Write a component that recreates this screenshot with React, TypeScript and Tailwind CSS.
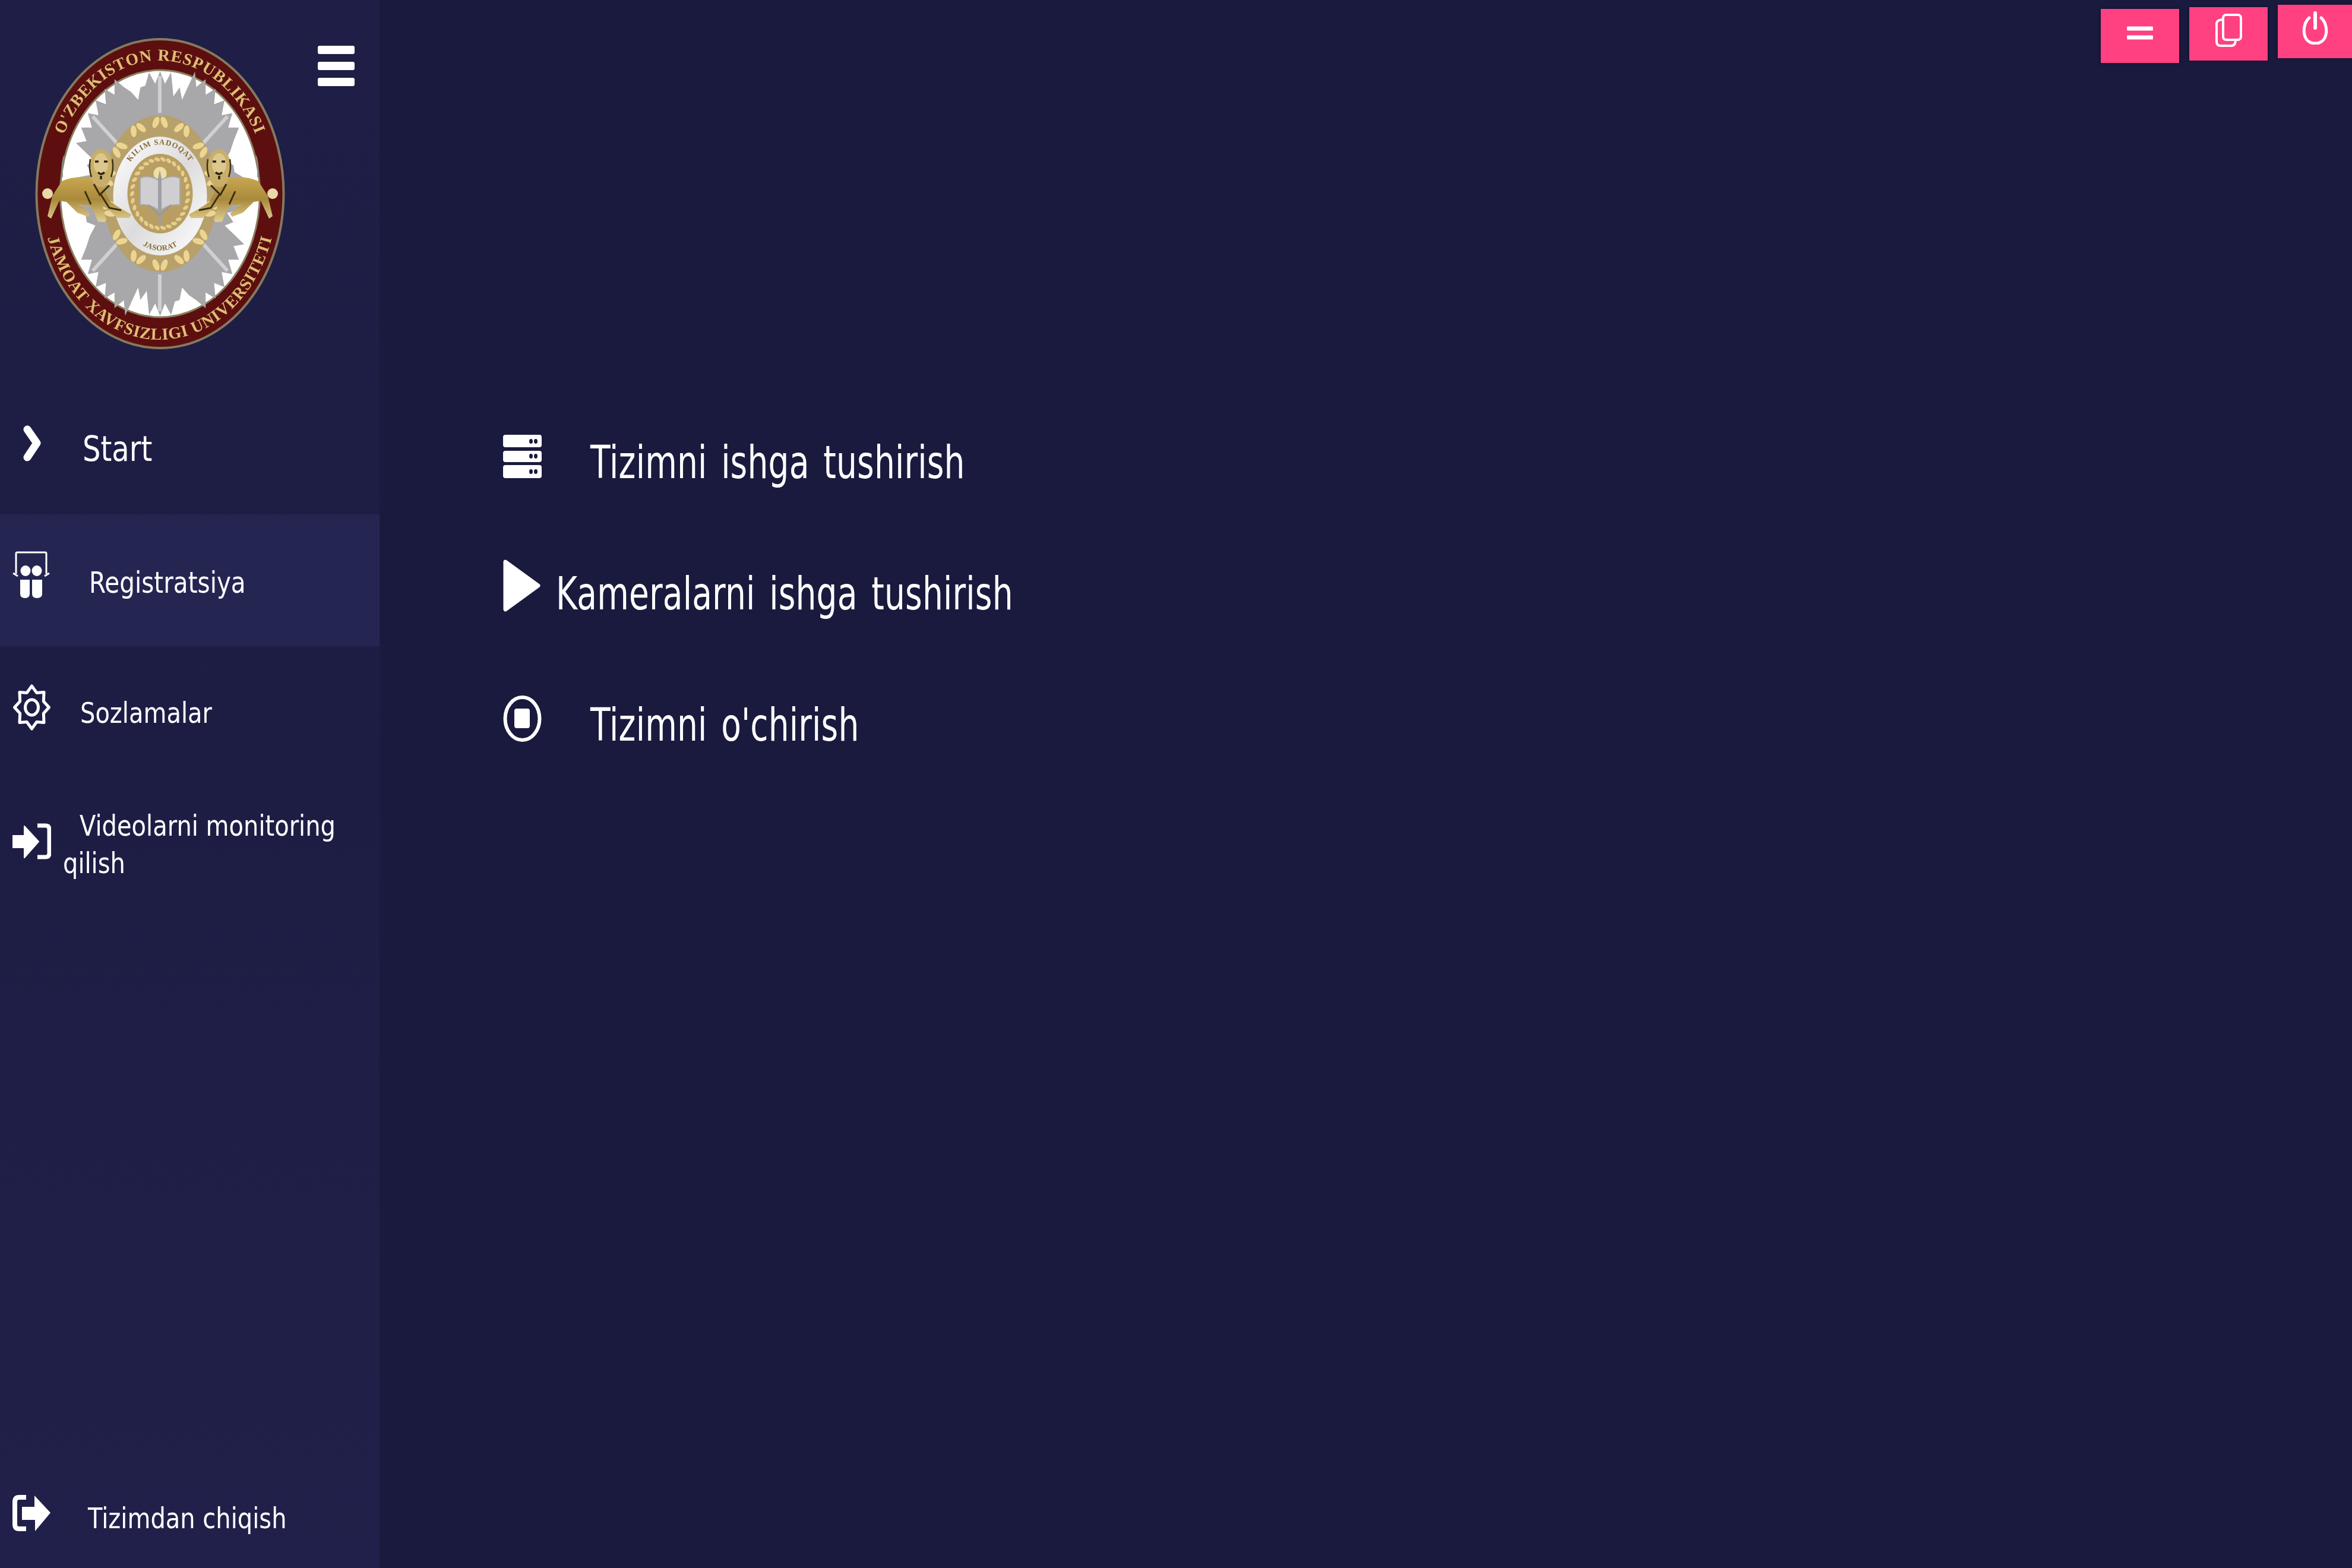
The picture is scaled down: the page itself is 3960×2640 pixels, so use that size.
import React from "react";

const cx = 269.5;
const cy = 326;

function starPoints() {
  const pts: string[] = [];
  const n = 48;
  for (let i = 0; i < n * 2; i++) {
    const a = (i / (n * 2)) * Math.PI * 2 - Math.PI / 2;
    const step = Math.round((i / (n * 2)) * 16) % 4;
    const quarter = Math.round((i / (n * 2)) * 8) % 2;
    const base = quarter === 1 ? 1.08 : step === 0 ? 1.0 : 0.9;
    const r = i % 2 === 0 ? base : base * 0.9;
    pts.push(`${cx + Math.cos(a) * r * 142},${cy + Math.sin(a) * r * 206}`);
  }
  return pts.join(" ");
}

function gearPoints() {
  const pts: string[] = [];
  for (let i = 0; i < 16; i++) {
    const a = (i / 16) * Math.PI * 2 - Math.PI / 2;
    const r = i % 2 === 0 ? 1 : 0.74;
    pts.push(`${32.5 + Math.cos(a) * r * 29},${40 + Math.sin(a) * r * 36}`);
  }
  return pts.join(" ");
}

function Lion() {
  return (
    <g>
      <path
        d="M104 305C120 297 145 297 160 300L172 312L186 340L205 352L221 361L218 367L198 367L183 353L172 346L179 370L176 374L165 373L155 350L148 345L134 345L152 360L148 365L130 358L112 340L100 338L86 368L80 364L88 330Z"
        fill="url(#lionBody)"
      />
      <ellipse cx="170" cy="283" rx="20" ry="32" fill="#c9ae6a" />
      <ellipse cx="170" cy="276" rx="12" ry="18" fill="#dcc78d" />
      <path d="M160 272h6M175 272h6M165 290q5 6 11 0M170 296v6" stroke="#2c2410" strokeWidth="3.5" fill="none" />
      <path d="M152 268q-3 16 2 30M189 268q3 16-2 30" stroke="#3c3116" strokeWidth="2.5" fill="none" />
      <path d="M158 310l10 18l16-16M143 322l10 22M170 328l14 22l20 4" stroke="#3a2e12" strokeWidth="3" fill="none" />
      <path d="M108 262q-5 14 -3 36" stroke="#888" strokeWidth="2" fill="none" />
    </g>
  );
}

function Logo() {
  const leaves = [];
  for (let i = 0; i < 14; i++) {
    const a = (i / 14) * Math.PI * 2 - Math.PI / 2;
    const x = cx + Math.cos(a) * 88;
    const y = cy + Math.sin(a) * 120;
    const deg = (a * 180) / Math.PI + 90;
    leaves.push(
      <g key={i} transform={`translate(${x} ${y}) rotate(${deg})`}>
        <ellipse cx="-7" cy="0" rx="5" ry="10" fill="#ecd590" transform="rotate(22 -7 0)" />
        <ellipse cx="7" cy="0" rx="5" ry="10" fill="#ecd590" transform="rotate(-22 7 0)" />
      </g>
    );
  }
  const laurels = [];
  for (let i = 0; i < 30; i++) {
    const a = (i / 30) * Math.PI * 2;
    laurels.push(
      <ellipse
        key={i}
        cx={cx + Math.cos(a) * 47}
        cy={cy + Math.sin(a) * 58}
        rx="3"
        ry="5"
        fill="#e6cf8e"
        transform={`rotate(${(a * 180) / Math.PI + 30} ${cx + Math.cos(a) * 47} ${cy + Math.sin(a) * 58})`}
      />
    );
  }
  return (
    <svg viewBox="50 55 440 545" className="h-[545px] w-[440px] shrink-0 blur-[0.7px]">
      <defs>
        <linearGradient id="lionBody" x1="0" y1="0" x2="0" y2="1">
          <stop offset="0" stopColor="#c9a750" />
          <stop offset="0.5" stopColor="#a98a3c" />
          <stop offset="1" stopColor="#e3cf94" />
        </linearGradient>
        <linearGradient id="whiteBand" x1="0" y1="0" x2="1" y2="1">
          <stop offset="0" stopColor="#ffffff" />
          <stop offset="0.5" stopColor="#dcdcdc" />
          <stop offset="1" stopColor="#ffffff" />
        </linearGradient>
        <path id="topArc" d="M89 326A180 224 0 0 1 449 326" />
        <path id="botArc" d="M71 326A198 246 0 0 0 467 326" />
        <path id="innerTop" d="M206 320A63 76 0 0 1 333 320" />
        <path id="innerBot" d="M205 340A65 82 0 0 0 335 340" />
      </defs>
      <ellipse cx={cx} cy={cy} rx="208" ry="260" fill="#5d0f10" stroke="#857a5e" strokeWidth="4" />
      <ellipse cx={cx} cy={cy} rx="168" ry="208" fill="#ffffff" stroke="#8b8060" strokeWidth="3" />
      <polygon points={starPoints()} fill="#a8a8aa" />
      <g stroke="#d0d0d2" strokeWidth="6">
        <path d="M269 128V190M269 462V524M156 196L205 250M383 196L334 250M156 456L205 402M383 456L334 402" />
      </g>
      <ellipse cx={cx} cy={cy} rx="97" ry="132" fill="#b8a06a" />
      {leaves}
      <ellipse cx={cx} cy="330" rx="79" ry="100" fill="url(#whiteBand)" />
      <ellipse cx={cx} cy={cy} rx="55" ry="67" fill="#b89e62" />
      {laurels}
      <circle cx={cx} cy="292" r="11" fill="#f0dfa5" />
      <path d="M269 304C255 296 243 296 236 300V345C248 344 260 348 269 356C278 348 290 344 303 345V300C295 296 283 296 269 304Z" fill="#cfcfd2" stroke="#a8a8ac" strokeWidth="2" />
      <path d="M269 286L272 300V360L269 390L266 360V300Z" fill="#a0a0a4" />
      <path d="M250 345L269 362L288 345" stroke="#999" strokeWidth="3" fill="none" />
      <g fontFamily="'Liberation Serif', serif" fontWeight="700" fill="#dcbf74">
        <text fontSize="28" textAnchor="middle" letterSpacing="1">
          <textPath href="#topArc" startOffset="50%">O'ZBEKISTON RESPUBLIKASI</textPath>
        </text>
        <text fontSize="28" textAnchor="middle" letterSpacing="1">
          <textPath href="#botArc" startOffset="50%">JAMOAT XAVFSIZLIGI UNIVERSITETI</textPath>
        </text>
      </g>
      <g fontFamily="'Liberation Serif', serif" fontWeight="700" fill="#8a6a36" fontSize="13">
        <text textAnchor="middle" letterSpacing="1">
          <textPath href="#innerTop" startOffset="50%">KILIM   SADOQAT</textPath>
        </text>
        <text textAnchor="middle" letterSpacing="0.5">
          <textPath href="#innerBot" startOffset="50%">JASORAT</textPath>
        </text>
      </g>
      <Lion />
      <g transform="translate(539 0) scale(-1 1)">
        <Lion />
      </g>
      <circle cx="80" cy="326" r="9" fill="#e9d9a8" />
      <circle cx="459" cy="326" r="9" fill="#e9d9a8" />
    </svg>
  );
}

const SideIcons = {
  chevron: (
    <svg width="65" height="64" viewBox="0 0 65 64" className="shrink-0">
      <path d="M25 7L41 30L25 54" stroke="#fff" strokeWidth="13" strokeLinejoin="round" strokeLinecap="round" fill="none" />
    </svg>
  ),
  reg: (
    <svg width="65" height="80" viewBox="0 0 65 80" className="shrink-0">
      <path d="M6 38V4Q6 2 8 2H55Q57 2 57 4V38" stroke="#fff" strokeWidth="3" fill="none" />
      <path d="M1 37L9 42M62 37L54 42" stroke="#fff" strokeWidth="3" fill="none" />
      <ellipse cx="22" cy="33" rx="8.5" ry="9" fill="#fff" />
      <ellipse cx="41" cy="33" rx="8.5" ry="9" fill="#fff" />
      <path d="M13 48H29V72Q29 79 21 79Q13 79 13 72Z" fill="#fff" />
      <path d="M33 48H50V72Q50 79 41 79Q33 79 33 72Z" fill="#fff" />
    </svg>
  ),
  gear: (
    <svg width="65" height="80" viewBox="0 0 65 80" className="shrink-0">
      <polygon points={gearPoints()} stroke="#fff" strokeWidth="5" strokeLinejoin="round" fill="none" />
      <ellipse cx="32.5" cy="40" rx="11" ry="13" stroke="#fff" strokeWidth="5" fill="none" />
    </svg>
  ),
  login: (
    <svg width="65" height="62" viewBox="0 0 65 62" className="shrink-0">
      <path d="M0 21H20V5L44 31L20 58V41H0Z" fill="#fff" strokeLinejoin="round" stroke="#fff" strokeWidth="2" />
      <path d="M42 4H56Q62 4 62 11V50Q62 57 56 57H42" stroke="#fff" strokeWidth="7" fill="none" />
    </svg>
  ),
  logout: (
    <svg width="65" height="62" viewBox="0 0 65 62" className="shrink-0">
      <path d="M23 4H11Q4 4 4 12V49Q4 57 11 57H23" stroke="#fff" strokeWidth="8" fill="none" />
      <path d="M16 20H37V1L64 30L38 61V42H16Z" fill="#fff" />
    </svg>
  ),
};

function NavRow({
  icon,
  label,
  active,
  textClass,
  iconClass,
}: {
  icon: React.ReactNode;
  label: string;
  active?: boolean;
  textClass: string;
  iconClass: string;
}) {
  return (
    <div className={`flex h-[222px] items-center pl-[21px] ${active ? "bg-[#252552]" : ""}`}>
      <div className={iconClass}>{icon}</div>
      <span className={`inline-block origin-center whitespace-nowrap scale-y-[1.22] ${textClass}`}>{label}</span>
    </div>
  );
}

function MainRow({ icon, label, gap }: { icon: React.ReactNode; label: string; gap: string }) {
  return (
    <div className={`flex h-[221px] items-center ${gap}`}>
      {icon}
      <span className="mt-[3px] inline-block origin-center scale-y-[1.4] whitespace-nowrap text-[55px] leading-none tracking-[0.2px] text-white [word-spacing:6px]">
        {label}
      </span>
    </div>
  );
}

export default function App() {
  return (
    <div className="flex h-[2640px] w-[3960px] overflow-hidden bg-[#1a1a3e] font-['DejaVu_Sans',sans-serif]">
      <aside className="flex h-full w-[639px] shrink-0 flex-col bg-linear-to-b from-[#1e1e46] via-[#1d1d44] to-[#20204a] text-white">
        <div className="flex h-[644px] items-start pl-[50px] pt-[55px]">
          <Logo />
          <div className="ml-[45px] mt-[22px] flex w-[62px] flex-col gap-[13px]">
            <div className="h-[14px] rounded-[3px] bg-white" />
            <div className="h-[14px] rounded-[3px] bg-white" />
            <div className="h-[14px] rounded-[3px] bg-white" />
          </div>
        </div>
        <NavRow icon={SideIcons.chevron} label="Start" textClass="ml-[53px] text-[48px] leading-none" iconClass="-mt-[14px]" />
        <NavRow
          icon={SideIcons.reg}
          label="Registratsiya"
          active
          textClass="ml-[64px] mt-[9px] text-[40.5px] leading-none"
          iconClass="-mt-[18px]"
        />
        <NavRow icon={SideIcons.gear} label="Sozlamalar" textClass="ml-[49px] mt-[2px] text-[40px] leading-none" iconClass="-mt-[16px]" />
        <div className="flex h-[222px] items-center pl-[21px]">
          <div className="-mt-[8px]">{SideIcons.login}</div>
          <p className="ml-[20px] mt-[1px] origin-center scale-y-[1.22] whitespace-nowrap text-[40px] leading-[51px] indent-[28px]">
            Videolarni monitoring
            <br />
            qilish
          </p>
        </div>
        <div className="mt-auto flex h-[200px] items-center pl-[21px] pt-[24px]">
          <div className="-mt-[9px]">{SideIcons.logout}</div>
          <span className="ml-[62px] mt-[8px] inline-block origin-center scale-y-[1.22] whitespace-nowrap text-[40px] leading-none">
            Tizimdan chiqish
          </span>
        </div>
      </aside>
      <main className="flex min-w-0 flex-1 flex-col">
        <div className="flex h-[106px] justify-end gap-[17px]">
          <button className="mt-[15px] flex h-[91px] w-[132px] items-start justify-center bg-[#ff4081] pt-[29px] shadow-[0_0_4px_#0a0a2a]">
            <svg width="44" height="24" viewBox="0 0 44 24">
              <path d="M2 4H42M2 19H42" stroke="#fff" strokeWidth="7" strokeLinecap="round" />
            </svg>
          </button>
          <button className="mt-[12px] flex h-[90px] w-[132px] items-start justify-center bg-[#ff4081] pt-[11px] shadow-[0_0_4px_#0a0a2a]">
            <svg width="46" height="56" viewBox="0 0 46 56" fill="none" stroke="#fff" strokeWidth="4">
              <rect x="14" y="2" width="30" height="42" rx="5" />
              <path d="M12 10Q3 11 3 17V47Q3 54 10 54H28Q34 54 35 46" />
            </svg>
          </button>
          <button className="mt-[8px] flex h-[90px] w-[125px] items-start justify-center bg-[#ff4081] pt-[11px] shadow-[0_0_4px_#0a0a2a]">
            <svg width="44" height="56" viewBox="0 0 44 56" fill="none" stroke="#fff" strokeWidth="5" strokeLinecap="round">
              <path d="M12 11C-1 22 -1 54 22 54C45 54 45 22 32 11" />
              <path d="M22 3V28" strokeWidth="6" />
            </svg>
          </button>
        </div>
        <div className="pl-[208px] pt-[561px]">
          <MainRow
            gap="gap-[82px]"
            label="Tizimni ishga tushirish"
            icon={
              <svg width="65" height="74" viewBox="0 0 65 74" className="-mt-[18px] shrink-0">
                <rect y="0" width="65" height="21" rx="4" fill="#fff" />
                <rect y="27" width="65" height="19" rx="4" fill="#fff" />
                <rect y="51" width="65" height="22" rx="4" fill="#fff" />
                <g fill="#1a1a3e">
                  <ellipse cx="47" cy="11" rx="3" ry="4" />
                  <ellipse cx="55" cy="11" rx="3" ry="4" />
                  <ellipse cx="47" cy="36" rx="3" ry="4" />
                  <ellipse cx="55" cy="36" rx="3" ry="4" />
                  <ellipse cx="47" cy="62" rx="3" ry="4" />
                  <ellipse cx="55" cy="62" rx="3" ry="4" />
                </g>
              </svg>
            }
          />
          <MainRow
            gap="gap-[26px]"
            label="Kameralarni ishga tushirish"
            icon={
              <svg width="63" height="88" viewBox="0 0 63 88" className="-mt-[26px] shrink-0">
                <path d="M4 4L59 44L4 84Z" fill="#fff" stroke="#fff" strokeWidth="7" strokeLinejoin="round" />
              </svg>
            }
          />
          <MainRow
            gap="gap-[82px]"
            label="Tizimni o'chirish"
            icon={
              <svg width="65" height="80" viewBox="0 0 65 80" className="-mt-[20px] shrink-0">
                <ellipse cx="32.5" cy="40" rx="29" ry="36" stroke="#fff" strokeWidth="6" fill="none" />
                <rect x="19" y="23" width="26" height="33" rx="4" fill="#fff" />
              </svg>
            }
          />
        </div>
      </main>
    </div>
  );
}
